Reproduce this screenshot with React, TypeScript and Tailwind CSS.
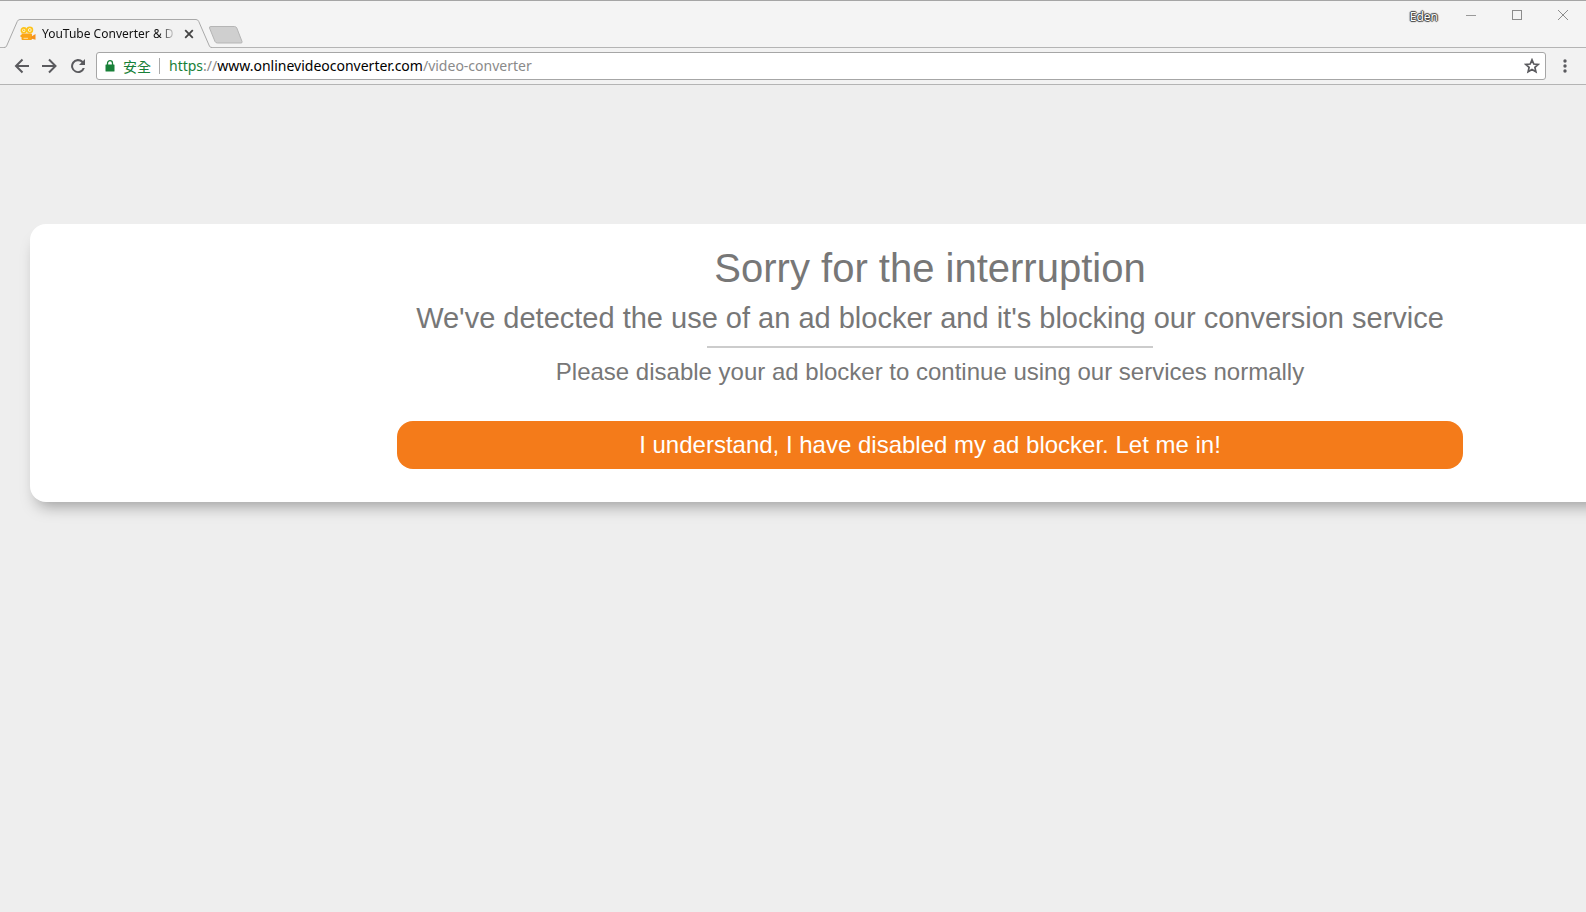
import React, { useState } from 'react';

function TabEdge({ flip }: { flip?: boolean }) {
  return (
    <svg width="16" height="29" viewBox="0 0 16 29" className={flip ? '-scale-x-100' : ''} aria-hidden="true">
      <path d="M0 29 L1 28.5 Q2 28.2 2.6 27 L13.2 2.6 Q14 .5 16 .5 V29Z" fill="#f2f2f2" />
      <path d="M0 28.5 Q2 28.5 2.6 27 L13.2 2.6 Q14 .5 16 .5" fill="none" stroke="#a9a9a9" />
    </svg>
  );
}

function CameraIcon() {
  return (
    <svg width="16" height="16" viewBox="0 0 16 16" aria-hidden="true">
      <circle cx="3.800" cy="4.200" r="2.400" fill="#fff" stroke="#fdc31b" strokeWidth="1.700" />
      <circle cx="9.800" cy="4" r="2.600" fill="#fff" stroke="#fdc31b" strokeWidth="1.700" />
      <circle cx="3.800" cy="4.200" r=".9" fill="#fdc31b" />
      <circle cx="9.800" cy="4" r="1" fill="#fdc31b" />
      <path d="M1.500 7.500H11Q12 7.500 12 8.500V13Q12 14 11 14H2.500Q1.500 14 1.500 13V11H.5V9H1.500Z" fill="#fba417" />
      <path d="M11 10.800L15.500 8V13.800L11 12.500Z" fill="#f6921e" />
      <path d="M3.500 12.300h4.500" stroke="#ffe0a0" />
    </svg>
  );
}

function WindowControls() {
  return (
    <div className="flex items-start">
      <span
        className="mr-[10px] mt-2 text-xs leading-4 text-white"
        style={{ textShadow: '0 0 1px #222, 1px 0 1px #444, -1px 0 1px #444, 0 1px 1px #444, 0 -1px 1px #444' }}
      >
        Eden
      </span>
      <button type="button" aria-label="Minimize" className="flex h-7 w-[46px] items-center justify-center">
        <svg width="10" height="10" viewBox="0 0 10 10"><path d="M0 5.500h10" stroke="#999" /></svg>
      </button>
      <button type="button" aria-label="Maximize" className="flex h-7 w-[46px] items-center justify-center">
        <svg width="10" height="10" viewBox="0 0 10 10"><rect x=".5" y=".5" width="9" height="9" fill="none" stroke="#8c8c8c" /></svg>
      </button>
      <button type="button" aria-label="Close" className="flex h-7 w-[46px] items-center justify-center">
        <svg width="10" height="10" viewBox="0 0 10 10"><path d="M0 0l10 10M10 0l-10 10" stroke="#8c8c8c" /></svg>
      </button>
    </div>
  );
}

function TabStrip() {
  return (
    <div className="flex h-12 justify-between border-t border-[#a5a5a5] bg-[#f4f4f4] shadow-[inset_0_-1px_0_#b4b4b4]">
      <div className="flex items-end pl-1">
        <TabEdge />
        <div className="flex h-[29px] w-44 items-center border-t border-[#a9a9a9] bg-[#f2f2f2]">
          <CameraIcon />
          <span className="ml-[6px] w-[134px] whitespace-nowrap bg-linear-to-r from-[#111] from-88% to-transparent bg-clip-text text-xs leading-5 text-transparent">
            YouTube Converter &amp; D
          </span>
          <button type="button" aria-label="Close tab" className="ml-2">
            <svg width="10" height="10" viewBox="0 0 10 10"><path d="M1.200 1.200l7.600 7.600M8.800 1.200l-7.600 7.600" stroke="#444" strokeWidth="1.800" /></svg>
          </button>
        </div>
        <TabEdge flip />
        <button type="button" aria-label="New tab" className="-ml-1 mb-1">
          <svg width="36" height="18" viewBox="0 0 36 18">
            <path d="M3 .5H26.500Q28 .5 28.800 2L34 15.500Q34.500 17 33 17H9.500Q7.800 17 7 15.500L1.500 2Q1 .5 3 .5Z" fill="#cfcfcf" stroke="#b5b5b5" />
          </svg>
        </button>
      </div>
      <WindowControls />
    </div>
  );
}

function Toolbar() {
  const [url, setUrl] = useState('https://www.onlinevideoconverter.com/video-converter');

  return (
    <div className="flex h-[37px] items-center border-b border-[#b4b4b4] bg-[#f2f2f2]">
      <div className="flex items-center gap-3 pl-[14px] pr-[10px] text-[#5a5a5e]">
        <button type="button" aria-label="Back">
          <svg width="16" height="16" viewBox="0 0 16 16" fill="none" stroke="currentColor" strokeWidth="2"><path d="M15 8H2.500M8.500 1.500L2 8l6.500 6.500" /></svg>
        </button>
        <button type="button" aria-label="Forward">
          <svg width="16" height="16" viewBox="0 0 16 16" fill="none" stroke="currentColor" strokeWidth="2"><path d="M0 8h13M7 1.500L13.500 8l-6.500 6.500" /></svg>
        </button>
        <button type="button" aria-label="Reload">
          <svg width="16" height="16" viewBox="0 0 16 16"><path d="M13 3A7 7 0 1 0 14.800 10H12.700A5 5 0 1 1 11.500 4.500L9 7H15V1Z" fill="currentColor" /></svg>
        </button>
      </div>
      <div className="flex h-7 flex-1 items-center rounded-[3px] border border-[#a6a6a6] bg-white pl-2 pr-[5px]">
        <svg width="10" height="12" viewBox="0 0 10 12" aria-hidden="true">
          <path d="M1 4.500H9Q9.500 4.500 9.500 5V11Q9.500 11.500 9 11.500H1Q.5 11.500 .5 11V5Q.5 4.500 1 4.500Z" fill="#188038" />
          <path d="M2.500 5V3.200a2.500 2.500 0 0 1 5 0V5" fill="none" stroke="#188038" strokeWidth="1.300" />
        </svg>
        <span className="ml-2 font-['Noto_Sans_CJK_TC',sans-serif] text-sm leading-5 text-[#188038]">安全</span>
        <span className="mx-2 h-4 w-px bg-[#aaa]" />
        <label className="relative flex-1 whitespace-nowrap pl-px text-sm leading-6 text-[#8a8a8a]">
          <span aria-hidden="true">
            <span className="text-[#188038]">https</span>://<span className="text-black">www.onlinevideoconverter.com</span>/video-converter
          </span>
          <input
            aria-label="Address"
            value={url}
            onChange={(e) => setUrl(e.target.value)}
            className="absolute inset-0 w-full bg-transparent text-transparent outline-none"
          />
        </label>
        <button type="button" aria-label="Bookmark this page">
          <svg width="16" height="16" viewBox="0 0 16 16"><path d="M8 1.800L9.800 6l4.500.4-3.400 3 1 4.400L8 11.500l-3.900 2.300 1-4.400-3.400-3L6.200 6Z" fill="none" stroke="#5a5a5e" strokeWidth="1.700" /></svg>
        </button>
      </div>
      <button type="button" aria-label="Menu" className="mr-[2px] flex w-[38px] justify-center">
        <svg width="4" height="14" viewBox="0 0 4 14" fill="#5a5a5e"><circle cx="2" cy="2" r="1.700" /><circle cx="2" cy="7" r="1.700" /><circle cx="2" cy="12" r="1.700" /></svg>
      </button>
    </div>
  );
}

export default function App() {
  return (
    <div className="flex min-h-screen flex-col overflow-hidden bg-[#eee] font-['Noto_Sans','Noto_Sans_CJK_TC',sans-serif]">
      <header>
        <TabStrip />
        <Toolbar />
      </header>
      <main className="mt-[139px] font-['Liberation_Sans',Arial,sans-serif] text-[#777]">
        {/* the notice is wider than the window and runs off its right side */}
        <section className="-mr-[244px] ml-[30px] flex flex-col items-center rounded-2xl bg-white pb-[33px] pt-5 shadow-[0_11px_16px_-7px_rgba(0,0,0,0.35)]">
          <h1 className="text-[40px] leading-[48px]">Sorry for the interruption</h1>
          <h2 className="mt-2 text-[29px] leading-9">We've detected the use of an ad blocker and it's blocking our conversion service</h2>
          <hr className="mt-[10px] w-[446px] border-t-2 border-[#ccc]" />
          <p className="mt-2 text-2xl leading-8">Please disable your ad blocker to continue using our services normally</p>
          <button type="button" className="mt-[33px] h-12 w-[1066px] rounded-2xl bg-[#f47b1a] text-2xl text-white">
            I understand, I have disabled my ad blocker. Let me in!
          </button>
        </section>
      </main>
    </div>
  );
}
